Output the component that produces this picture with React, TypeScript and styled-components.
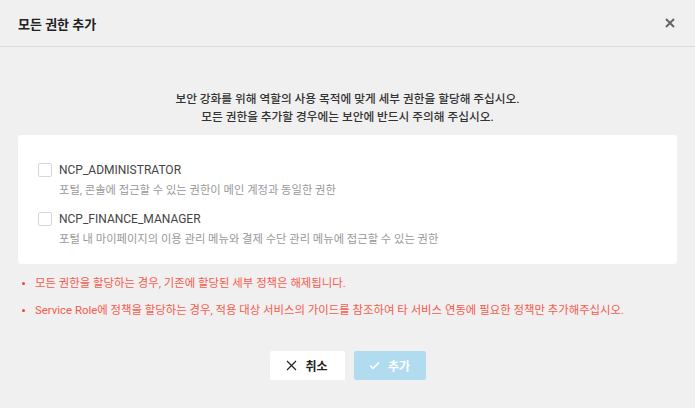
import { FC } from 'react';
import styled, { createGlobalStyle } from 'styled-components';

const GlobalStyle = createGlobalStyle`
  html, body {
    margin: 0;
    padding: 0;
    background: #f0f0f0;
  }
  body {
    font-family: Roboto, "Noto Sans CJK KR", sans-serif;
    color: #333;
  }
`;

const StyledModal = styled.div`
  width: 695px;
  height: 408px;
  background: #f0f0f0;
  display: flex;
  flex-direction: column;
`;

const StyledHeader = styled.div`
  height: 47px;
  border-bottom: 1px solid #dcdcdc;
  display: flex;
  align-items: center;
  justify-content: space-between;
  padding: 0 18px 0 18px;
  box-sizing: border-box;
`;

const StyledTitle = styled.h2`
  margin: 0;
  font-size: 13px;
  font-weight: 700;
  color: #222;
`;

const StyledClose = styled.button`
  border: 0;
  background: none;
  padding: 0;
  width: 14px;
  height: 14px;
  display: flex;
  align-items: center;
  justify-content: center;
  cursor: pointer;
`;

const StyledBody = styled.div`
  padding: 43px 18px 0 18px;
  display: flex;
  flex-direction: column;
`;

const StyledIntro = styled.p`
  margin: 0 0 9px;
  text-align: center;
  font-size: 11.7px;
  line-height: 18px;
  font-weight: 500;
  color: #333;
`;

const StyledCard = styled.div`
  background: #fff;
  border-radius: 3px;
  padding: 27px 20px 17px;
  display: flex;
  flex-direction: column;
  gap: 13px;
`;

const StyledItem = styled.label`
  display: grid;
  grid-template-columns: 14px 1fr;
  column-gap: 7px;
  row-gap: 5px;
  align-items: center;
`;

const StyledCheckbox = styled.span`
  width: 12px;
  height: 12px;
  border: 1px solid #d6d6d6;
  border-radius: 2px;
  background: #fff;
`;

const StyledItemName = styled.span`
  font-size: 12px;
  line-height: 16px;
  color: #444;
`;

const StyledItemDesc = styled.span`
  grid-column: 2;
  font-size: 11.3px;
  line-height: 15px;
  color: #999;
`;

const StyledNotes = styled.ul`
  list-style: none;
  margin: 12px 0 0;
  padding: 0 0 0 4px;
  display: flex;
  flex-direction: column;
  gap: 12px;
`;

const StyledNote = styled.li`
  display: flex;
  align-items: center;
  gap: 10px;
  font-size: 11.4px;
  line-height: 15px;
  color: #f65a4c;

  &::before {
    content: '';
    width: 3px;
    height: 3px;
    border-radius: 50%;
    background: #f1453a;
    flex: none;
  }
`;

const StyledFooter = styled.div`
  display: flex;
  justify-content: center;
  gap: 9px;
  margin-top: 33px;
`;

const StyledButton = styled.button<{ $primary?: boolean }>`
  height: 29px;
  width: ${(props) => (props.$primary ? '72px' : '75px')};
  border: 0;
  border-radius: 2px;
  background: ${(props) => (props.$primary ? '#b1dcef' : '#fff')};
  color: ${(props) => (props.$primary ? '#fff' : '#222')};
  font-family: inherit;
  font-size: 12px;
  font-weight: 700;
  display: flex;
  align-items: center;
  justify-content: center;
  gap: 8px;
  padding: 0;
`;

const permissions = [
  {
    name: 'NCP_ADMINISTRATOR',
    desc: '포털, 콘솔에 접근할 수 있는 권한이 메인 계정과 동일한 권한',
  },
  {
    name: 'NCP_FINANCE_MANAGER',
    desc: '포털 내 마이페이지의 이용 관리 메뉴와 결제 수단 관리 메뉴에 접근할 수 있는 권한',
  },
];

const notes = [
  '모든 권한을 할당하는 경우, 기존에 할당된 세부 정책은 해제됩니다.',
  'Service Role에 정책을 할당하는 경우, 적용 대상 서비스의 가이드를 참조하여 타 서비스 연동에 필요한 정책만 추가해주십시오.',
];

const App: FC = () => (
  <>
    <GlobalStyle />
    <StyledModal>
      <StyledHeader>
        <StyledTitle>모든 권한 추가</StyledTitle>
        <StyledClose aria-label="닫기">
          <svg width="10" height="10" viewBox="0 0 10 10">
            <path d="M1 1L9 9M9 1L1 9" stroke="#666" strokeWidth="2" />
          </svg>
        </StyledClose>
      </StyledHeader>
      <StyledBody>
        <StyledIntro>
          보안 강화를 위해 역할의 사용 목적에 맞게 세부 권한을 할당해 주십시오.
          <br />
          모든 권한을 추가할 경우에는 보안에 반드시 주의해 주십시오.
        </StyledIntro>
        <StyledCard>
          {permissions.map((item) => (
            <StyledItem key={item.name}>
              <StyledCheckbox />
              <StyledItemName>{item.name}</StyledItemName>
              <StyledItemDesc>{item.desc}</StyledItemDesc>
            </StyledItem>
          ))}
        </StyledCard>
        <StyledNotes>
          {notes.map((note) => (
            <StyledNote key={note}>{note}</StyledNote>
          ))}
        </StyledNotes>
        <StyledFooter>
          <StyledButton>
            <svg width="11" height="11" viewBox="0 0 11 11">
              <path d="M1 1L10 10M10 1L1 10" stroke="#222" strokeWidth="1.2" />
            </svg>
            취소
          </StyledButton>
          <StyledButton $primary>
            <svg width="11" height="9" viewBox="0 0 11 9">
              <path d="M1 4.5L4 7.5L10 1.5" stroke="#fff" strokeWidth="1.5" fill="none" />
            </svg>
            추가
          </StyledButton>
        </StyledFooter>
      </StyledBody>
    </StyledModal>
  </>
);

export default App;
